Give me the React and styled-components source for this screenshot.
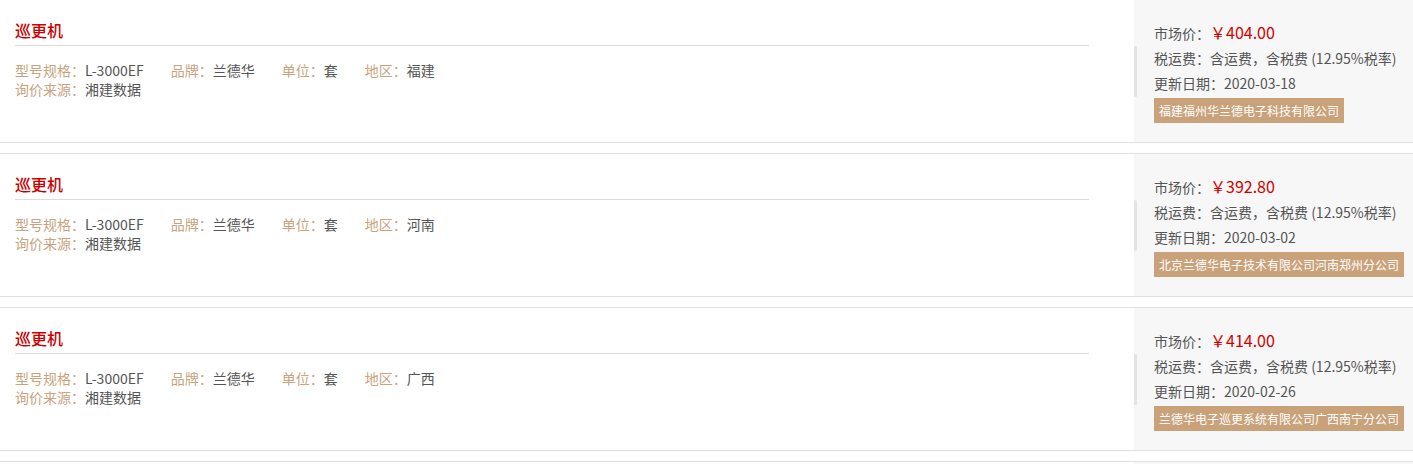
import styled, { createGlobalStyle } from "styled-components";

const GlobalStyle = createGlobalStyle`
  html, body {
    margin: 0;
    padding: 0;
    background: #fff;
  }
  body {
    font-family: "Noto Sans CJK SC", "Noto Sans", sans-serif;
    font-size: 14px;
    color: #555;
  }
`;

const List = styled.div`
  margin-top: -1px;
`;

const Item = styled.div`
  display: flex;
  height: 142px;
  border-top: 1px solid #e0e0e0;
  border-bottom: 1px solid #e0e0e0;
  margin-bottom: 10px;
`;

const Main = styled.div`
  flex: 1;
  padding: 15px 45px 0 15px;
`;

const Title = styled.div`
  height: 30px;
  line-height: 30px;
  font-size: 16px;
  font-weight: 500;
  color: #cc0000;
  border-bottom: 1px solid #dcdcdc;
  margin-bottom: 15px;
`;

const SpecRow = styled.div`
  display: flex;
  line-height: 19px;
`;

const Spec = styled.span`
  margin-right: 27px;
  white-space: nowrap;
`;

const Label = styled.span`
  color: #c9a37d;
`;

const Value = styled.span`
  color: #555;
`;

const Side = styled.div`
  position: relative;
  width: 259px;
  flex-shrink: 0;
  background: #f7f7f7;
  padding: 20px 0 0 20px;

  &::before {
    content: "";
    position: absolute;
    left: 0;
    top: 46px;
    width: 3px;
    height: 51px;
    border-radius: 2px;
    background: #e3e3e3;
  }
`;

const Line = styled.div`
  line-height: 25px;
  color: #555;
  white-space: nowrap;
`;

const Price = styled.span`
  color: #d40000;
  font-size: 16px;
`;

const Company = styled.div`
  display: inline-block;
  margin-top: 2px;
  padding: 0 5px;
  height: 25px;
  line-height: 25px;
  background: #c9a27a;
  color: #fff;
  font-size: 12px;
  white-space: nowrap;
`;

const items = [
  { region: "福建", price: "404.00", date: "2020-03-18", company: "福建福州华兰德电子科技有限公司" },
  { region: "河南", price: "392.80", date: "2020-03-02", company: "北京兰德华电子技术有限公司河南郑州分公司" },
  { region: "广西", price: "414.00", date: "2020-02-26", company: "兰德华电子巡更系统有限公司广西南宁分公司" },
];

const Product = ({ region, price, date, company }) => (
  <Item>
    <Main>
      <Title>巡更机</Title>
      <SpecRow>
        <Spec>
          <Label>型号规格：</Label>
          <Value>L-3000EF</Value>
        </Spec>
        <Spec>
          <Label>品牌：</Label>
          <Value>兰德华</Value>
        </Spec>
        <Spec>
          <Label>单位：</Label>
          <Value>套</Value>
        </Spec>
        <Spec>
          <Label>地区：</Label>
          <Value>{region}</Value>
        </Spec>
      </SpecRow>
      <SpecRow>
        <Spec>
          <Label>询价来源：</Label>
          <Value>湘建数据</Value>
        </Spec>
      </SpecRow>
    </Main>
    <Side>
      <Line>
        市场价：<Price>￥{price}</Price>
      </Line>
      <Line>税运费：含运费，含税费 (12.95%税率)</Line>
      <Line>更新日期：{date}</Line>
      <Company>{company}</Company>
    </Side>
  </Item>
);

const Next = styled.div`
  display: flex;
  height: 40px;
  border-top: 1px solid #e0e0e0;
`;

const NextMain = styled.div`
  flex: 1;
`;

const NextSide = styled.div`
  width: 279px;
  background: #f7f7f7;
`;

export default function App() {
  return (
    <>
      <GlobalStyle />
      <List>
        {items.map((it) => (
          <Product key={it.date} {...it} />
        ))}
        <Next>
          <NextMain />
          <NextSide />
        </Next>
      </List>
    </>
  );
}
